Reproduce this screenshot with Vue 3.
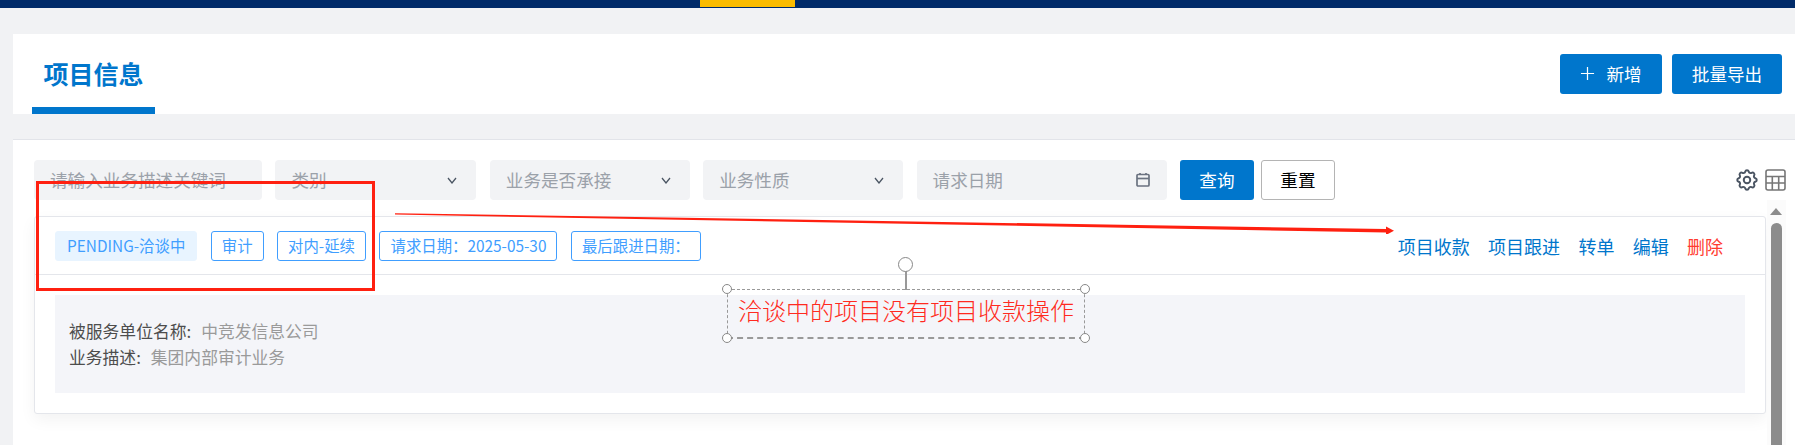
<template>
  <div class="page">
    <div class="topbar"><span class="topbar-active"></span></div>

    <div class="head">
      <div class="head-tab">项目信息</div>
      <div class="head-actions">
        <button class="btn btn-primary btn-add">
          <svg class="plus" viewBox="0 0 16 16"><path d="M8 1v14M1 8h14" /></svg>
          新增
        </button>
        <button class="btn btn-primary btn-export">批量导出</button>
      </div>
    </div>

    <div class="panel">
      <div class="filters">
        <div class="field field-keyword"><span>请输入业务描述关键词</span></div>
        <div
          v-for="item in selects"
          :key="item.label"
          class="field"
          :style="{ width: item.width + 'px' }"
        >
          <span>{{ item.label }}</span>
          <svg class="chevron" viewBox="0 0 10 7"><path d="M1 1l4 5 4-5" /></svg>
        </div>
        <div class="field field-date">
          <span>请求日期</span>
          <svg class="calendar" viewBox="0 0 14 14">
            <rect x="1" y="1.5" width="12" height="11.5" rx="1" />
            <path d="M1 5.5h12" />
            <path d="M4 0v1.5M10 0v1.5" />
          </svg>
        </div>
        <div class="filter-btns">
          <button class="btn btn-primary btn-query">查询</button>
          <button class="btn btn-reset">重置</button>
        </div>
        <div class="tools">
          <svg class="gear" viewBox="0 0 24 24">
            <path d="M10.325 4.317c.426-1.756 2.924-1.756 3.35 0a1.724 1.724 0 002.573 1.066c1.543-.94 3.31.826 2.37 2.37a1.724 1.724 0 001.065 2.572c1.756.426 1.756 2.924 0 3.35a1.724 1.724 0 00-1.066 2.573c.94 1.543-.826 3.31-2.37 2.37a1.724 1.724 0 00-2.572 1.065c-.426 1.756-2.924 1.756-3.35 0a1.724 1.724 0 00-2.573-1.066c-1.543.94-3.31-.826-2.37-2.37a1.724 1.724 0 00-1.065-2.572c-1.756-.426-1.756-2.924 0-3.35a1.724 1.724 0 001.066-2.573c-.94-1.543.826-3.31 2.37-2.37.996.608 2.296.07 2.572-1.065z" />
            <circle cx="12" cy="12" r="3" />
          </svg>
          <svg class="grid" viewBox="0 0 21 22">
            <rect x="1" y="1" width="19" height="20" rx="2" />
            <path d="M1 7.5h19M1 14h19M7.3 7.5V21M13.7 7.5V21" />
          </svg>
        </div>
      </div>

      <div class="list-wrap">
        <div class="item">
          <div class="item-head">
            <div class="tags">
              <span class="tag tag-fill">PENDING-洽谈中</span>
              <span v-for="t in tags" :key="t" class="tag">{{ t }}</span>
            </div>
            <div class="links">
              <a v-for="l in links" :key="l" class="link">{{ l }}</a>
              <a class="link link-del">删除</a>
            </div>
          </div>
          <div class="item-body">
            <div class="info">
              <p><span class="info-label">被服务单位名称:</span><span class="info-val">中竞发信息公司</span></p>
              <p><span class="info-label">业务描述:</span><span class="info-val">集团内部审计业务</span></p>
            </div>
          </div>
        </div>
        <div class="scroll">
          <span class="scroll-up"></span>
          <span class="scroll-thumb"></span>
        </div>
      </div>
    </div>

    <!-- 截图上的标注 -->
    <div class="mark-box"></div>
    <svg class="mark-arrow" viewBox="0 0 1000 22">
      <path d="M0 1.2 L992 17 L992 20.5 L0 2.6 Z" />
      <path d="M992 14.5 L1000 18.7 L992 23 Z" />
    </svg>
    <div class="note">
      <span class="note-stem"></span>
      <span class="note-rotate"></span>
      <span class="dot dot-tl"></span>
      <span class="dot dot-tr"></span>
      <span class="dot dot-bl"></span>
      <span class="dot dot-br"></span>
      洽谈中的项目没有项目收款操作
    </div>
  </div>
</template>

<script setup>
const selects = [
  { label: "类别", width: 201 },
  { label: "业务是否承接", width: 200 },
  { label: "业务性质", width: 200 },
]
const tags = ["审计", "对内-延续", "请求日期：2025-05-30", "最后跟进日期："]
const links = ["项目收款", "项目跟进", "转单", "编辑"]
</script>

<style>
html,
body {
  margin: 0;
  background: #f1f2f4;
}
</style>

<style scoped>
.page {
  position: relative;
  display: flex;
  flex-direction: column;
  width: 1795px;
  height: 445px;
  overflow: hidden;
  background: #f1f2f4;
  font-family: "Noto Sans CJK SC", "Noto Sans", sans-serif;
  font-size: 17.6px;
}
.topbar {
  flex: none;
  height: 8px;
  padding-left: 700px;
  background: #002b69;
}
.topbar-active {
  display: block;
  width: 95px;
  height: 7px;
  background: #fbbc00;
}
.head {
  flex: none;
  display: flex;
  align-items: center;
  justify-content: space-between;
  height: 80px;
  margin: 26px 0 0 13px;
  padding: 0 13px 0 19px;
  background: #fff;
}
.head-tab {
  align-self: flex-end;
  box-sizing: border-box;
  width: 123px;
  height: 80px;
  padding-top: 19px;
  border-bottom: 7px solid #0076cc;
  color: #0076cc;
  font-size: 25px;
  font-weight: 700;
  line-height: 40px;
  text-align: center;
}
.head-actions {
  display: flex;
  gap: 10px;
}
.btn {
  box-sizing: border-box;
  height: 40px;
  padding: 0 0 2px;
  border: 0;
  border-radius: 3px;
  font-family: inherit;
  font-size: 17.6px;
}
.btn-primary {
  background: #0076cc;
  color: #fff;
}
.btn-add {
  display: flex;
  align-items: center;
  justify-content: center;
  gap: 11px;
  width: 102px;
}
.plus {
  width: 15px;
  height: 15px;
  fill: none;
  stroke: #fff;
  stroke-width: 1.3;
}
.btn-export {
  width: 110px;
}
.panel {
  flex: 1;
  margin: 25px 0 0 13px;
  border-top: 1px solid #e2e4e9;
  background: #fff;
}
.filters {
  display: flex;
  align-items: center;
  gap: 13.4px;
  padding: 20px 9px 0 21px;
}
.field {
  box-sizing: border-box;
  display: flex;
  flex: none;
  align-items: center;
  justify-content: space-between;
  height: 40px;
  padding: 0 19px 0 16px;
  border-radius: 4px;
  background: #f2f3f5;
  color: #9ba1a9;
}
.field span {
  padding-bottom: 2px;
}
.field-keyword {
  width: 228px;
  white-space: nowrap;
}
.field-date {
  width: 250px;
  padding-right: 17px;
}
.chevron {
  width: 10px;
  height: 7px;
  fill: none;
  stroke: #4b5563;
  stroke-width: 1.3;
}
.calendar {
  width: 14px;
  height: 14px;
  fill: none;
  stroke: #6b7280;
  stroke-width: 1.7;
}
.filter-btns {
  display: flex;
  gap: 7px;
}
.btn-query {
  width: 74px;
}
.btn-reset {
  width: 74px;
  border: 1px solid #b4b4b4;
  background: #fff;
  color: #000;
}
.tools {
  display: flex;
  gap: 7px;
  margin-left: auto;
}
.gear {
  width: 26px;
  height: 26px;
  margin: -2px -2px -2px 0;
  fill: none;
  stroke: #4b5563;
  stroke-width: 1.8;
}
.grid {
  width: 21px;
  height: 22px;
  fill: none;
  stroke: #767676;
  stroke-width: 1.6;
}
.list-wrap {
  display: flex;
  align-items: flex-start;
  padding-left: 21px;
}
.item {
  box-sizing: border-box;
  flex: none;
  width: 1732px;
  margin-top: 16px;
  border: 1px solid #e4e6eb;
  border-radius: 3px;
  background: #fff;
  box-shadow: 0 6px 16px rgba(0, 0, 0, 0.05);
}
.item-head {
  display: flex;
  align-items: center;
  justify-content: space-between;
  height: 57px;
  padding: 0 42px 0 20px;
  border-bottom: 1px solid #e4e6eb;
}
.tags {
  display: flex;
  gap: 13.5px;
}
.tag {
  box-sizing: border-box;
  height: 30px;
  padding: 0 10px;
  border: 1px solid #409eff;
  border-radius: 3px;
  color: #409eff;
  font-size: 15.4px;
  line-height: 27px;
}
.tag-fill {
  padding: 0 11px;
  border-color: #e8f4ff;
  background: #e8f4ff;
}
.links {
  display: flex;
  gap: 18.3px;
  font-size: 18px;
}
.link {
  color: #0076cc;
}
.link-del {
  color: #ff3b30;
}
.item-body {
  padding: 20px;
}
.info {
  box-sizing: border-box;
  height: 98px;
  padding: 23px 14px 0;
  background: #f4f5f9;
  font-size: 16.8px;
}
.info p {
  margin: 0;
  line-height: 26px;
}
.info-label {
  margin-right: 10px;
  color: #4d4d4d;
}
.info-val {
  color: #9a9a9a;
}
.scroll {
  position: relative;
  flex: none;
  width: 19px;
  height: 245px;
  margin-left: 1px;
  background: #fbfbfb;
}
.scroll-up {
  position: absolute;
  left: 3px;
  top: 8px;
  width: 0;
  height: 0;
  border-left: 6px solid transparent;
  border-right: 6px solid transparent;
  border-bottom: 7px solid #8c8c8c;
}
.scroll-thumb {
  position: absolute;
  left: 4px;
  top: 23px;
  width: 11px;
  height: 260px;
  border-radius: 6px;
  background: #8c8c8c;
}

/* 标注层 */
.mark-box {
  position: absolute;
  left: 36px;
  top: 181px;
  box-sizing: border-box;
  width: 339px;
  height: 110px;
  border: 3px solid #ff2010;
}
.mark-arrow {
  position: absolute;
  left: 395px;
  top: 212px;
  width: 999px;
  height: 22px;
  fill: #ff2010;
}
.note {
  position: absolute;
  left: 727px;
  top: 289px;
  box-sizing: border-box;
  width: 358px;
  height: 50px;
  padding-left: 10px;
  border: 1.5px dashed #999;
  border-bottom-width: 2px;
  color: #ff2a20;
  font-size: 24px;
  font-weight: 300;
  line-height: 40px;
  white-space: nowrap;
}
.note-stem {
  position: absolute;
  left: 177px;
  top: -20px;
  width: 2px;
  height: 20px;
  background: #999;
}
.note-rotate {
  position: absolute;
  left: 170px;
  top: -33px;
  box-sizing: border-box;
  width: 15px;
  height: 15px;
  border: 1.5px solid #888;
  border-radius: 50%;
  background: #fff;
}
.dot {
  position: absolute;
  box-sizing: border-box;
  width: 10px;
  height: 10px;
  border: 1.5px solid #888;
  border-radius: 50%;
  background: #fff;
}
.dot-tl {
  left: -6px;
  top: -6px;
}
.dot-tr {
  right: -6px;
  top: -6px;
}
.dot-bl {
  left: -6px;
  bottom: -6px;
}
.dot-br {
  right: -6px;
  bottom: -6px;
}
</style>
